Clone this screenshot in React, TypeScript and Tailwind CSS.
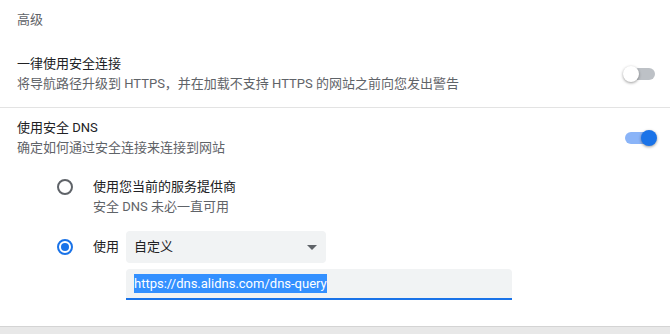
import React from "react"

const font = { fontFamily: '"Roboto", "Noto Sans CJK SC", sans-serif' }

function Toggle({ on }: { on: boolean }) {
  return (
    <div className="relative w-[34px] h-[16px] shrink-0">
      <div
        className={`absolute left-[2px] right-[2px] top-[2px] h-[12px] rounded-full ${
          on ? "bg-[#8ab4f8]" : "bg-[#bdc1c6]"
        }`}
      />
      <div
        className={`absolute top-0 w-[16px] h-[16px] rounded-full shadow-[0_1px_3px_rgba(0,0,0,0.4)] ${
          on ? "right-0 bg-[#1a73e8]" : "left-0 bg-white"
        }`}
      />
    </div>
  )
}

function Radio({ checked }: { checked: boolean }) {
  return (
    <div
      className={`w-[16px] h-[16px] rounded-full border-2 flex items-center justify-center shrink-0 ${
        checked ? "border-[#1a73e8]" : "border-[#5f6368]"
      }`}
    >
      {checked && <div className="w-[8px] h-[8px] rounded-full bg-[#1a73e8]" />}
    </div>
  )
}

export default function App() {
  return (
    <div className="w-[670px] h-[334px] bg-[#e8e8e8] overflow-hidden text-[13px] leading-[20px]" style={font}>
      <div className="h-[327px] bg-white border-b border-[#d4d4d4]">
        {/* Header */}
        <div className="h-[40px] flex items-center px-[17px] text-[#5f6368]">高级</div>

        {/* HTTPS row */}
        <div className="flex items-center justify-between pl-[17px] pr-[13px] pt-[14px] pb-[13px]">
          <div>
            <p className="text-[#202124]">一律使用安全连接</p>
            <p className="text-[#5f6368]">将导航路径升级到 HTTPS，并在加载不支持 HTTPS 的网站之前向您发出警告</p>
          </div>
          <Toggle on={false} />
        </div>

        <div className="h-px bg-[#e3e3e3]" />

        {/* Secure DNS */}
        <div className="flex items-center justify-between pl-[17px] pr-[13px] pt-[10px]">
          <div>
            <p className="text-[#202124]">使用安全 DNS</p>
            <p className="text-[#5f6368]">确定如何通过安全连接来连接到网站</p>
          </div>
          <Toggle on={true} />
        </div>

        <div className="pl-[57px] pt-[19px]">
          <div className="flex items-start gap-[20px]">
            <div className="pt-[2px]">
              <Radio checked={false} />
            </div>
            <div>
              <p className="text-[#202124]">使用您当前的服务提供商</p>
              <p className="text-[#5f6368]">安全 DNS 未必一直可用</p>
            </div>
          </div>

          <div className="flex items-center gap-[20px] mt-[14px]">
            <Radio checked={true} />
            <span className="text-[#202124]">使用</span>
            <div className="-ml-[13px] w-[200px] h-[32px] rounded-[4px] bg-[#f1f3f4] flex items-center justify-between pl-[8px] pr-[9px] text-[#202124]">
              <span>自定义</span>
              <div className="w-0 h-0 border-l-[5px] border-r-[5px] border-t-[5px] border-l-transparent border-r-transparent border-t-[#5f6368]" />
            </div>
          </div>

          <div className="ml-[69px] mt-[6px] w-[386px] h-[31px] rounded-t-[4px] bg-[#f1f3f4] border-b-2 border-[#1a73e8] flex items-center pl-[8px]">
            <span className="bg-[#3390ff] text-white leading-[19px] text-[13px]">https://dns.alidns.com/dns-query</span>
          </div>
        </div>
      </div>
    </div>
  )
}
